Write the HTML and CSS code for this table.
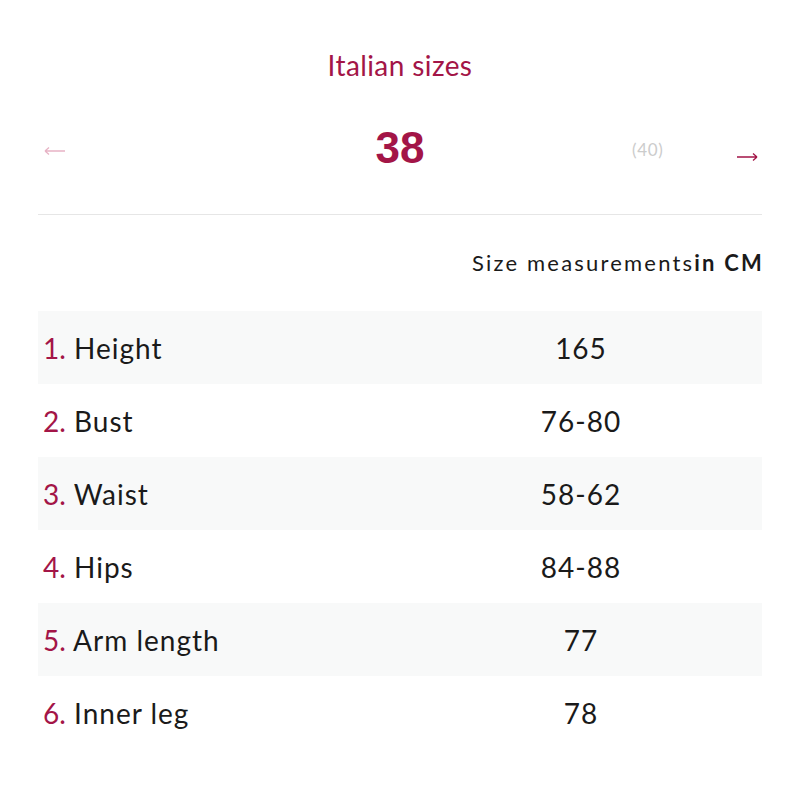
FILE: index.html
```html
<!DOCTYPE html>
<html>
<head>
<meta charset="utf-8">
<link rel="stylesheet" href="styles.css">
</head>
<body>
<div class="page">
  <h1 class="title">Italian sizes</h1>
  <div class="switcher">
    <span class="arrow arrow-prev">
      <svg width="22" height="10" viewBox="0 0 22 10"><path d="M1 5H21M1 5L5 1.5M1 5L5 8.5" fill="none" stroke="currentColor" stroke-width="1.3"/></svg>
    </span>
    <span class="current">38</span>
    <span class="alt">(40)</span>
    <span class="arrow arrow-next">
      <svg width="22" height="10" viewBox="0 0 22 10"><path d="M1 5H21M21 5L17 1.5M21 5L17 8.5" fill="none" stroke="currentColor" stroke-width="1.3"/></svg>
    </span>
  </div>
  <div class="unit">Size measurements<b>in CM</b></div>
  <div class="table">
    <div class="row"><span class="label"><span class="num">1.</span> Height</span><span class="value">165</span></div>
    <div class="row"><span class="label"><span class="num">2.</span> Bust</span><span class="value">76-80</span></div>
    <div class="row"><span class="label"><span class="num">3.</span> Waist</span><span class="value">58-62</span></div>
    <div class="row"><span class="label"><span class="num">4.</span> Hips</span><span class="value">84-88</span></div>
    <div class="row"><span class="label"><span class="num">5.</span> Arm length</span><span class="value">77</span></div>
    <div class="row"><span class="label"><span class="num">6.</span> Inner leg</span><span class="value">78</span></div>
  </div>
</div>
</body>
</html>
```
FILE: styles.css
```css
* { box-sizing: border-box; }
body {
  margin: 0;
  background: #fff;
  font-family: Lato, "Open Sans", sans-serif;
  color: #1a1a1a;
}
.page {
  padding: 0 38px;
}
.title {
  margin: 0;
  padding-top: 48px;
  text-align: center;
  font-weight: 400;
  font-size: 28px;
  letter-spacing: 0.4px;
  line-height: 34px;
  color: #a31547;
}
.switcher {
  position: relative;
  display: flex;
  align-items: center;
  justify-content: center;
  height: 117px;
  margin-top: 16px;
  border-bottom: 1px solid #e6e6e6;
}
.arrow {
  position: absolute;
  display: flex;
}
.arrow-prev {
  left: 6px;
  top: 48px;
  color: #e7b3c5;
}
.arrow-next {
  right: 4px;
  top: 54px;
  color: #a31547;
}
.current {
  font-family: "Liberation Sans", Arial, sans-serif;
  font-weight: 700;
  font-size: 44px;
  color: #a31547;
  margin-top: -17px;
}
.alt {
  position: absolute;
  left: 594px;
  top: 41px;
  font-size: 17px;
  letter-spacing: 0.7px;
  color: #cccccc;
}
.unit {
  text-align: right;
  font-size: 22px;
  letter-spacing: 2.2px;
  padding-top: 34px;
  height: 96px;
  margin-right: -2px;
  color: #1a1a1a;
}
.unit b { font-weight: 700; }
.table {
  display: flex;
  flex-direction: column;
}
.row {
  display: grid;
  grid-template-columns: 362px 1fr;
  align-items: center;
  height: 73px;
  font-size: 28px;
  letter-spacing: 1px;
}
.row:nth-child(odd) { background: #f8f9f9; }
.label { padding-left: 5px; }
.num { color: #a31547; letter-spacing: 0; }
.value { text-align: center; }
```
